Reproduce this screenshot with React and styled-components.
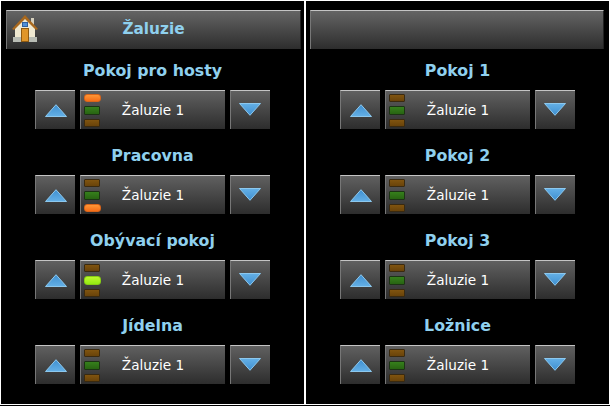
import React from "react"
import styled, { createGlobalStyle } from "styled-components"

const GlobalStyle = createGlobalStyle`
    html, body {
        margin: 0;
        padding: 0;
        background: #000;
    }
`
const Screen = styled.div`
    width: 610px;
    height: 405px;
    box-sizing: border-box;
    display: flex;
    gap: 2px;
    padding: 1px;
    background: #fff;
    overflow: hidden;
`
const Panel = styled.div`
    width: 303px;
    background: #000;
    padding-top: 9px;
    display: flex;
    flex-direction: column;
`
const Header = styled.div`
    position: relative;
    height: 39px;
    width: ${(p) => p.$width}px;
    margin-left: ${(p) => p.$inset}px;
    box-sizing: border-box;
    display: flex;
    align-items: center;
    justify-content: center;
    background: linear-gradient(#646464, #2d2d2d);
    border-top: 1px solid #c4c4c4;
    border-left: 1px solid #777;
    border-right: 1px solid #222;
    font-family: "DejaVu Sans", sans-serif;
    font-size: 15.3px;
    font-weight: bold;
    color: #8fd0ee;
    padding-bottom: 2px;
`
const HomeBadge = styled.svg`
    position: absolute;
    left: 5px;
    top: 3px;
`
const Room = styled.div`
    display: flex;
    flex-direction: column;
    align-items: center;
    height: 85px;
`
const RoomTitle = styled.div`
    font-family: "DejaVu Sans", sans-serif;
    font-size: 15.8px;
    font-weight: bold;
    color: #8fd0ee;
    height: 41px;
    line-height: 43px;
`
const Controls = styled.div`
    display: flex;
    gap: 5px;
`
const Tile = styled.div`
    height: 39px;
    box-sizing: border-box;
    display: flex;
    align-items: center;
    background: linear-gradient(#606060, #2d2d2d);
    border-top: 1px solid #c4c4c4;
    border-left: 1px solid #777;
`
const ArrowButton = styled(Tile)`
    width: 40px;
    justify-content: center;
`
const Selector = styled(Tile)`
    width: 145px;
    position: relative;
    justify-content: center;
    font-family: "DejaVu Sans", sans-serif;
    font-size: 13.6px;
    color: #fff;
    padding-bottom: 1px;
`
const Lights = styled.div`
    position: absolute;
    left: 3px;
    top: 3px;
    display: flex;
    flex-direction: column;
    gap: 4px;
`
const colors = {
    off: { fill: "linear-gradient(#80540f, #69430a)", edge: "#3a2a10" },
    green: { fill: "linear-gradient(#36801c, #286412)", edge: "#1c3314" },
    orange: { fill: "linear-gradient(#ff9636, #f56e18)", edge: "#d8641a" },
    lime: { fill: "linear-gradient(#bdf82c, #93ea12)", edge: "#86cc14" },
}
const Light = styled.div`
    width: ${(p) => (p.$on ? 17 : 16)}px;
    height: ${(p) => p.$height}px;
    box-sizing: border-box;
    background: ${(p) => colors[p.$color].fill};
    border: 1px solid ${(p) => colors[p.$color].edge};
    border-radius: ${(p) => (p.$on ? 3 : 1)}px;
`
const DownShift = styled.svg`
    margin: -2px 2px 0 0;
`

const HomeIcon = () => (
    <HomeBadge width="28" height="30" viewBox="0 0 28 30">
        <rect x="19" y="4" width="3" height="10" fill="#d5cfbd" />
        <path d="M3 13 L13 3 L23 13 V25 H3 Z" fill="#efe9d2" />
        <path d="M0 15 L13 1 L26 15 L24 16 L13 5 L2 16 Z" fill="#a8681e" />
        <rect x="10.5" y="8.5" width="5" height="4" fill="#4f8fd8" stroke="#2f5f9f" />
        <rect x="1" y="23" width="24" height="5" fill="#b9bdb5" />
        <rect x="9.5" y="14.5" width="7" height="13" fill="#e0962a" stroke="#8f5a12" />
    </HomeBadge>
)

const UpIcon = () => (
    <svg width="22" height="13" viewBox="0 0 22 13">
        <defs>
            <linearGradient id="upFill" x1="0" y1="0" x2="0" y2="1">
                <stop offset="0" stopColor="#3f8fd0" />
                <stop offset="1" stopColor="#64b0e6" />
            </linearGradient>
        </defs>
        <path d="M11 .7 L21.5 12.5 H.5 Z" fill="url(#upFill)" stroke="#8cc8ee" strokeWidth="1" />
    </svg>
)

const DownIcon = () => (
    <DownShift width="22" height="13" viewBox="0 0 22 13">
        <defs>
            <linearGradient id="downFill" x1="0" y1="0" x2="0" y2="1">
                <stop offset="0" stopColor="#64b0e6" />
                <stop offset="1" stopColor="#3f8fd0" />
            </linearGradient>
        </defs>
        <path d="M11 12.3 L21.5 .5 H.5 Z" fill="url(#downFill)" stroke="#8cc8ee" strokeWidth="1" />
    </DownShift>
)

const RoomRow = ({ name, active }) => {
    const base = ["off", "green", "off"]
    const heights = [8, 9, 8]
    return (
        <Room>
            <RoomTitle>{name}</RoomTitle>
            <Controls>
                <ArrowButton><UpIcon /></ArrowButton>
                <Selector>
                    <Lights>
                        {base.map((color, i) => (
                            <Light
                                key={i}
                                $height={heights[i]}
                                $color={active && active.slot === i ? active.color : color}
                                $on={active && active.slot === i}
                            />
                        ))}
                    </Lights>
                    Žaluzie 1
                </Selector>
                <ArrowButton><DownIcon /></ArrowButton>
            </Controls>
        </Room>
    )
}

const left = [
    { name: "Pokoj pro hosty", active: { slot: 0, color: "orange" } },
    { name: "Pracovna", active: { slot: 2, color: "orange" } },
    { name: "Obývací pokoj", active: { slot: 1, color: "lime" } },
    { name: "Jídelna" },
]
const right = [
    { name: "Pokoj 1" },
    { name: "Pokoj 2" },
    { name: "Pokoj 3" },
    { name: "Ložnice" },
]

const App = () => (
    <>
        <GlobalStyle />
        <Screen>
            <Panel>
                <Header $inset={5} $width={295}>
                    <HomeIcon />
                    Žaluzie
                </Header>
                {left.map((r) => <RoomRow key={r.name} {...r} />)}
            </Panel>
            <Panel>
                <Header $inset={4} $width={294} />
                {right.map((r) => <RoomRow key={r.name} {...r} />)}
            </Panel>
        </Screen>
    </>
)

export default App
